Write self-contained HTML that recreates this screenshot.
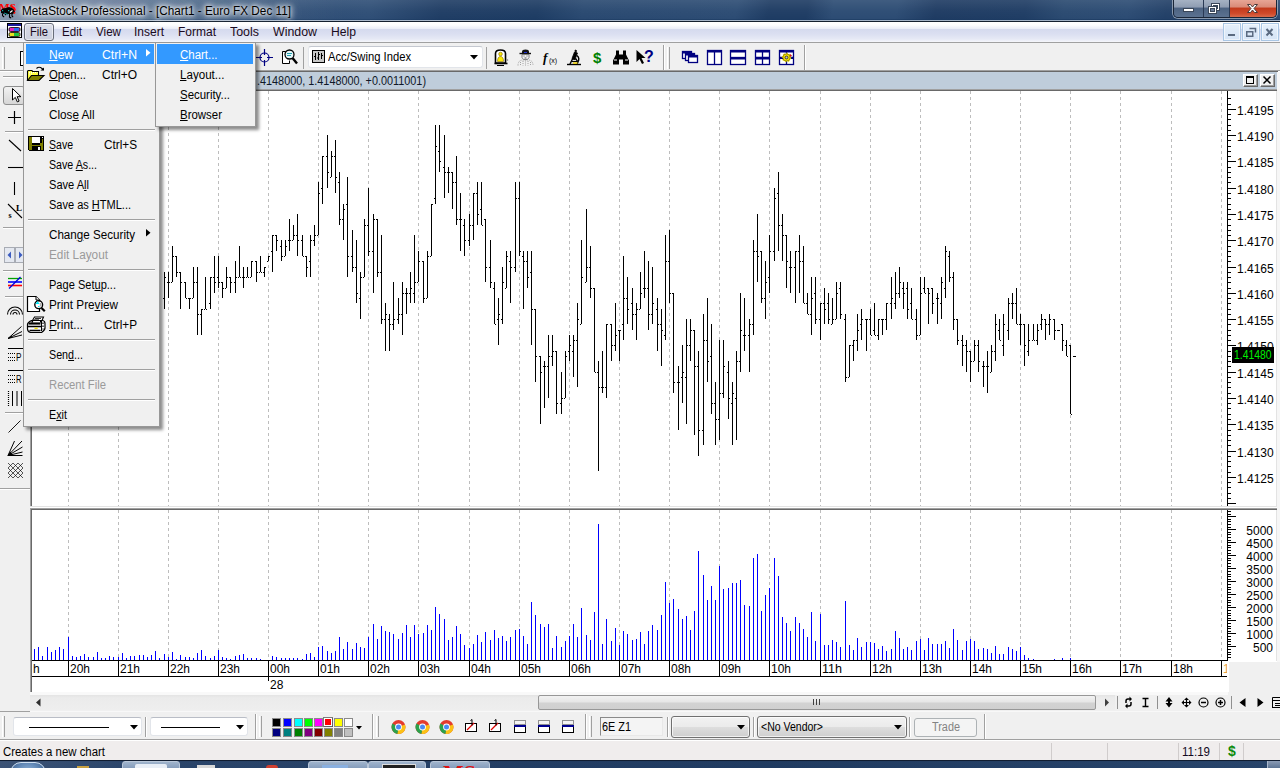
<!DOCTYPE html>
<html><head><meta charset="utf-8"><title>MetaStock Professional - [Chart1 - Euro FX Dec 11]</title>
<style>
html,body{margin:0;padding:0;background:#f0f0f0;}
body{width:1280px;height:768px;overflow:hidden;font-family:"Liberation Sans",sans-serif;font-size:12px;}
#root{position:relative;width:1280px;height:768px;overflow:hidden;background:#f0f0f0;}
.a{position:absolute;}
.t{position:absolute;white-space:nowrap;transform-origin:0 50%;line-height:14px;}
u{text-decoration:underline;text-underline-offset:1px;}
svg{position:absolute;overflow:visible;}

</style></head>
<body>
<div id="root">
<div class="a" id="titlebar" style="left:0;top:0;width:1280px;height:22px;background:linear-gradient(90deg,rgba(255,255,255,.34) 0,rgba(255,255,255,.22) 6%,rgba(255,255,255,.10) 16%,rgba(255,255,255,0) 27%),linear-gradient(180deg,rgba(255,255,255,.10) 0,rgba(255,255,255,.03) 50%,rgba(255,255,255,0) 100%),linear-gradient(100deg,#4a6485 0,#3c5a80 10%,#2b4b74 23%,#2d4d75 29%,#1d3b63 34.5%,#1b3a62 42%,#27476f 45.5%,#2a4a72 57.5%,#1c3a62 60%,#1c3a62 63%,#2a4a72 65%,#2a4a72 70%,#1c3961 73%,#1d3b63 80%,#28486f 83%,#2a4a72 88%,#203e66 91%,#233f66 96%,#2a4a72 100%);"></div>
<div class="a" style="left:0;top:19px;width:1280px;height:1px;background:linear-gradient(90deg,rgba(27,58,97,0) 0,rgba(27,58,97,.5) 30%,rgba(27,58,97,.7) 100%);"></div>
<div class="a" style="left:0;top:20px;width:1280px;height:1px;background:linear-gradient(90deg,#c9d4e0 0,#aab8ca 30%,#9fafc3 100%);"></div>
<div class="a" style="left:0;top:21px;width:1280px;height:1px;background:#15202f;"></div>
<svg style="left:0;top:0" width="20" height="20" viewBox="0 0 20 20"><text x="-1" y="11" font-family="Liberation Serif,serif" font-weight="bold" font-size="11" textLength="17" lengthAdjust="spacingAndGlyphs" fill="#ff0000">MS</text><path d="M1 10q1 -2 5 -2l3 -1 3 1q3 1 3 4l-2 2h-9l-3 -1z" fill="#000"/><path d="M11 5l4.500 5.500M14 13.500l1 -1.500" stroke="#ff0000" stroke-width="1.600"/><path d="M2.500 13.500v2l1 1.200M5 14l1 1M9.500 14v3l1 1M12 14v2.500" stroke="#000" stroke-width="1.100" fill="none"/><rect x="3" y="16" width="1.200" height="1.200" fill="#000"/><rect x="10" y="17" width="1.200" height="1.200" fill="#000"/><rect x="12" y="16" width="1.200" height="1.200" fill="#000"/><rect x="2" y="10" width="1.200" height="1.200" fill="#10b0b0"/><rect x="8" y="10" width="1.200" height="1.200" fill="#10b0b0"/><path d="M4 13l4 1.500" stroke="#109090" stroke-width="1"/><path d="M10 12.500l2.500 -2" stroke="#fff" stroke-width="1.300"/></svg>
<span class="t " style="left:22px;top:4px;font-size:12px;color:#000;transform:scaleX(0.9798);text-shadow:0 0 6px rgba(255,255,255,.95),0 0 5px rgba(255,255,255,.9),0 0 10px rgba(255,255,255,.8),0 0 14px rgba(255,255,255,.6),0 0 3px rgba(255,255,255,.7);">MetaStock Professional - [Chart1 - Euro FX Dec 11]</span>
<div class="a" style="left:1173px;top:-1px;width:102px;height:18px;border:1px solid #1a2638;border-top:none;border-radius:0 0 5px 5px;box-shadow:0 0 0 1px rgba(255,255,255,.45);overflow:hidden;"><div class="a" style="left:0;top:0;width:29px;height:18px;background:linear-gradient(180deg,#a9b5c6 0,#8f9db2 45%,#4d6382 50%,#5b7290 100%);border-right:1px solid #2a3a55;"></div><div class="a" style="left:30px;top:0;width:25px;height:18px;background:linear-gradient(180deg,#a9b5c6 0,#8f9db2 45%,#4d6382 50%,#5b7290 100%);border-right:1px solid #2a3a55;"></div><div class="a" style="left:56px;top:0;width:46px;height:18px;background:linear-gradient(180deg,#e9a99a 0,#d98a78 45%,#c2391c 50%,#d0492a 80%,#d8694a 100%);"></div></div>
<svg style="left:1173px;top:0" width="106" height="18" viewBox="0 0 106 18"><rect x="10.500" y="8.500" width="10" height="3" fill="#fff" stroke="#3a4658" stroke-width="1"/><rect x="38.500" y="3.500" width="8" height="7" fill="#fff" stroke="#3a4658"/><rect x="40.500" y="5.500" width="4" height="3" fill="#8a9ab0" stroke="#3a4658"/><rect x="35.500" y="6.500" width="8" height="7" fill="#fff" stroke="#3a4658"/><rect x="37.500" y="8.500" width="4" height="3" fill="#6a7c98" stroke="#3a4658"/><path d="M74.500 4.500h3l2 2.500 2 -2.500h3l-3.500 4 3.500 4h-3l-2 -2.500 -2 2.500h-3l3.500 -4z" fill="#fff" stroke="#4a3a3a" stroke-width="1"/></svg>
<div class="a" id="menubar" style="left:0;top:22px;width:1280px;height:20px;background:linear-gradient(180deg,#ffffff 0,#fdfdfe 3px,#e9ecf7 7px,#d5daee 7px,#dbdff1 12px,#e6e9f5 17px,#f0f2f9 19px,#f6f7fb 20px);"></div>
<div class="a" style="left:0;top:42px;width:1280px;height:1px;background:#a0a0a0;"></div>
<svg style="left:7px;top:23px" width="16" height="16" viewBox="0 0 16 16"><rect x="0.500" y="0.500" width="14" height="14" fill="#fff" stroke="#000"/><rect x="1" y="1" width="13" height="2" fill="#1a1a9a"/><rect x="2" y="4.500" width="11" height="4" rx="1.500" fill="#e020c0" stroke="#000" stroke-width=".8"/><rect x="7" y="5" width="5" height="3" fill="#2a6af0"/><rect x="2" y="9.500" width="11" height="4" rx="1.500" fill="#e8e020" stroke="#000" stroke-width=".8"/><rect x="7" y="10" width="5" height="3" fill="#20c040"/></svg>
<div class="a" style="left:24px;top:23px;width:28px;height:16px;border:1px solid #686d7a;border-radius:3px;background:linear-gradient(180deg,#dfe2ea 0,#d3d6e3 40%,#cdd1df 100%);box-shadow:inset 0 0 0 1px rgba(255,255,255,.5);"></div>
<span class="t " style="left:30px;top:25px;font-size:12px;color:#1a0a20;transform:scaleX(0.9310);">File</span>
<span class="t " style="left:62px;top:25px;font-size:12px;color:#1a0a20;transform:scaleX(0.9672);">Edit</span>
<span class="t " style="left:96px;top:25px;font-size:12px;color:#1a0a20;transform:scaleX(0.9693);">View</span>
<span class="t " style="left:134px;top:25px;font-size:12px;color:#1a0a20;transform:scaleX(0.9996);">Insert</span>
<span class="t " style="left:178px;top:25px;font-size:12px;color:#1a0a20;transform:scaleX(0.9999);">Format</span>
<span class="t " style="left:230px;top:25px;font-size:12px;color:#1a0a20;transform:scaleX(1.0353);">Tools</span>
<span class="t " style="left:273px;top:25px;font-size:12px;color:#1a0a20;transform:scaleX(1.0310);">Window</span>
<span class="t " style="left:331px;top:25px;font-size:12px;color:#1a0a20;transform:scaleX(1.0130);">Help</span>
<div class="a" style="left:1223px;top:23px;width:16px;height:16px;border:1px solid #a9c6e4;background:linear-gradient(180deg,#e6f0fb 0,#dce9f8 50%,#d6e5f6 100%);box-shadow:inset 0 0 0 1px rgba(255,255,255,.55);"></div>
<div class="a" style="left:1242px;top:23px;width:16px;height:16px;border:1px solid #a9c6e4;background:linear-gradient(180deg,#e6f0fb 0,#dce9f8 50%,#d6e5f6 100%);box-shadow:inset 0 0 0 1px rgba(255,255,255,.55);"></div>
<div class="a" style="left:1261px;top:23px;width:16px;height:16px;border:1px solid #a9c6e4;background:linear-gradient(180deg,#e6f0fb 0,#dce9f8 50%,#d6e5f6 100%);box-shadow:inset 0 0 0 1px rgba(255,255,255,.55);"></div>
<svg style="left:1223px;top:23px" width="58" height="19" viewBox="0 0 58 19"><rect x="5" y="11" width="7" height="2" fill="#5a6a80"/><path d="M26.500 5.500h6v4" fill="none" stroke="#5a6a80" stroke-width="1.500"/><rect x="23.750" y="8.750" width="6" height="4.500" fill="none" stroke="#5a6a80" stroke-width="1.500"/><path d="M43.500 6l6 6.500M49.500 6l-6 6.500" stroke="#5a6a80" stroke-width="2" fill="none"/></svg>
<div class="a" id="toolbar" style="left:0;top:43px;width:1280px;height:28px;background:#f0f0f0;"></div>
<div class="a" style="left:0;top:70px;width:1280px;height:1px;background:#a0a0a0;"></div>
<div class="a" style="left:0;top:71px;width:1280px;height:1px;background:#fff;"></div>
<div class="a" style="left:2px;top:47px;width:2px;height:22px;border-left:1px solid #fff;border-right:1px solid #a0a0a0;box-sizing:border-box;width:3px;"></div>
<div class="a" style="left:20px;top:51px;width:4px;height:13px;border:1px solid #000;border-right:none;background:#fff;"></div>
<svg style="left:256px;top:49px" width="18" height="18" viewBox="0 0 18 18"><circle cx="8.500" cy="8.500" r="4.500" fill="none" stroke="#000080" stroke-width="1.200"/><path d="M8.500 0v6M8.500 11v6M0 8.500h6M11 8.500h6" stroke="#000080" stroke-width="1.200"/></svg>
<svg style="left:280px;top:48px" width="20" height="20" viewBox="0 0 20 20"><path d="M2.500 3.500h8v4M2.500 3.500v12h7v-3" fill="#fff" stroke="#000" stroke-width="1"/><circle cx="9.500" cy="6.500" r="4.500" fill="#e6f6f8" stroke="#000" stroke-width="1.300"/><path d="M7 5.500h5M7 7.500h4" stroke="#20a0b0" stroke-width="1"/><path d="M12.500 10l4.500 5.500" stroke="#000" stroke-width="2.400"/></svg>
<div class="a" style="left:303px;top:47px;width:1px;height:22px;background:#a0a0a0;"></div>
<div class="a" style="left:308px;top:46px;width:175px;height:22px;box-sizing:border-box;background:#fff;border-radius:3px;border:1px solid #e2e5ea;border-top-color:#c4c8d0;"></div>
<svg style="left:312px;top:50px" width="14" height="14" viewBox="0 0 14 14"><rect x="0.500" y="0.500" width="12" height="12" fill="#c8c8c8" stroke="#000"/><path d="M3.500 3v7M6.500 2v8M9.500 3v6M2 6.500h1.500M6.500 4.500h1.500M9.500 5.500h1.500M5 8h1.500" stroke="#000" stroke-width="1"/></svg>
<span class="t " style="left:328px;top:50px;font-size:12px;color:#000;transform:scaleX(0.9356);">Acc/Swing Index</span>
<svg style="left:470px;top:55px" width="8" height="5" viewBox="0 0 8 5"><path d="M0 0h8l-4 4.500z" fill="#000"/></svg>
<div class="a" style="left:486px;top:47px;width:1px;height:22px;background:#a0a0a0;"></div>
<svg style="left:492px;top:48px" width="20" height="18" viewBox="492 48 20 18"><path d="M495.500 63v-9.500q0 -3.500 5 -3.500t5 3.500v9.500z" fill="#fff" stroke="#000" stroke-width="1.600"/><path d="M506.500 58.500l2 1.500 -2 1.500z" fill="#909090"/><path d="M494.500 63.500h13" stroke="#000" stroke-width="1.600"/><path d="M497 65.500h7" stroke="#000" stroke-width="1"/><circle cx="500.500" cy="54" r="1.800" fill="#f8e800" stroke="#806000" stroke-width=".6"/><path d="M497.500 61.500q0 -5 3 -5t3 5z" fill="#f8e800" stroke="#806000" stroke-width=".6"/></svg>
<svg style="left:516px;top:48px" width="20" height="18" viewBox="516 48 20 18"><path d="M519.500 53.500h11.500" stroke="#111" stroke-width="1.400"/><path d="M522 53v-1.500q0 -2 3.500 -2t3.500 2v1.500z" fill="#111"/><path d="M524 52.500h3" stroke="#2030d0" stroke-width="1"/><path d="M522 54.500h7v3l-1.500 2h-4l-1.500 -2z" fill="#f4f4f4" stroke="#666" stroke-width=".8"/><path d="M523.500 56h1M526.500 56h1M524.500 58h2" stroke="#333" stroke-width=".8"/><path d="M518 65.500q0 -5.500 5 -5.500h5q5 0 5 5.500M520.500 62v3.500M523 61v4.500M525.500 60.500v5M528 61v4.500M530.500 62v3.500" fill="none" stroke="#9a9a9a" stroke-width=".9" stroke-dasharray="1 1"/></svg>
<span class="t" style="left:543px;top:50px;font-family:'Liberation Serif',serif;font-style:italic;font-weight:bold;font-size:13px;line-height:15px;color:#000;">f</span>
<span class="t" style="left:549px;top:56px;font-size:7px;line-height:9px;color:#000;">(x)</span>
<svg style="left:565px;top:48px" width="18" height="18" viewBox="565 48 18 18"><path d="M567 64.500h14" stroke="#000" stroke-width="1.400"/><path d="M575 50l1.500 .5 -.5 2 1.500 .5 -2.500 6.500 -3 -1 2.500 -6.500 1 .3z" fill="#000" stroke="#000" stroke-width=".8"/><path d="M570 64l2.500 -5h3.500l1.500 2.500M577 55.500q3 2.500 1 6.500l-1 2" fill="none" stroke="#000" stroke-width="1.400"/><path d="M571.500 61.500h6" stroke="#000" stroke-width="1.200"/><rect x="573" y="62.300" width="4.500" height="1.500" fill="#f0d000"/></svg>
<span class="t " style="left:593px;top:49px;font-size:15px;color:#008000;font-weight:bold;line-height:17px;">$</span>
<svg style="left:612px;top:49px" width="18" height="16" viewBox="0 0 18 16"><path d="M4 1.500h3v4h4v-4h3v4l3 6v4h-6v-5h-4v5h-6v-4l3 -6z" fill="#000"/><path d="M2 11h3M13 11h3" stroke="#fff" stroke-width="1"/></svg>
<svg style="left:635px;top:49px" width="20" height="18" viewBox="0 0 20 18"><path d="M1.500 1v12l3 -3 2.500 5 2 -1 -2.500 -5h4z" fill="#000"/></svg>
<span class="t " style="left:644px;top:48px;font-size:16px;color:#000080;font-weight:bold;line-height:17px;">?</span>
<div class="a" style="left:663px;top:45px;width:1px;height:25px;background:#a0a0a0;"></div><div class="a" style="left:664px;top:45px;width:1px;height:25px;background:#fff;"></div>
<div class="a" style="left:667px;top:47px;width:2px;height:22px;border-left:1px solid #fff;border-right:1px solid #a0a0a0;box-sizing:border-box;width:3px;"></div>
<svg style="left:680px;top:47px" width="120" height="20" viewBox="0 0 120 20"><g fill="#fff" stroke="#000080" stroke-width="1.300"><rect x="2.500" y="4.500" width="9" height="7"/><rect x="5.500" y="6.500" width="9" height="7"/><rect x="8.500" y="8.500" width="9" height="7"/><rect x="27.500" y="3.500" width="14" height="14"/><path d="M34.500 3.500v14"/><rect x="50.500" y="3.500" width="15" height="14"/><path d="M50.500 10.500h15"/><rect x="75.500" y="3.500" width="14" height="14"/><path d="M82.500 3.500v14M75.500 10.500h14"/><rect x="99.500" y="3.500" width="14" height="14"/></g><g fill="#000080"><rect x="2" y="4" width="10" height="2.500"/><rect x="5" y="6" width="10" height="2.500"/><rect x="8" y="8" width="10" height="2.500"/><rect x="27" y="3" width="15" height="2.500"/><rect x="50" y="3" width="16" height="2.500"/><rect x="50" y="10" width="16" height="2.500"/><rect x="75" y="3" width="15" height="2.500"/><rect x="75" y="10" width="15" height="2.500"/><rect x="99" y="3" width="15" height="2.500"/></g><path d="M106.500 3.500v14M99.500 10.500h14" stroke="#000080" stroke-width="1.300"/><rect x="99" y="10" width="15" height="2" fill="#000080"/><circle cx="106.500" cy="10.500" r="3.600" fill="#f0e000" stroke="#e8d800" stroke-width="2.200" stroke-dasharray="1.600 1.100"/><circle cx="106.500" cy="10.500" r="3.600" fill="#f0e000" stroke="#504000" stroke-width=".5"/><circle cx="106.500" cy="10.500" r="1.400" fill="#c0c0d0" stroke="#202020" stroke-width=".8"/><path d="M110 7l2 1.500 -2 1.500z" fill="#d01010"/></svg>
<div class="a" style="left:804px;top:45px;width:1px;height:25px;background:#a0a0a0;"></div><div class="a" style="left:805px;top:45px;width:1px;height:25px;background:#fff;"></div>
<div class="a" id="lefttb" style="left:0;top:72px;width:30px;height:640px;background:#f0f0f0;"></div>
<div class="a" style="left:3px;top:76px;width:21px;height:1px;background:#a0a0a0;"></div><div class="a" style="left:3px;top:77px;width:21px;height:1px;background:#fff;"></div>
<div class="a" style="left:3px;top:86px;width:22px;height:19px;border:1px solid #8e8f8f;border-radius:3px;background:linear-gradient(180deg,#f2f2f2 0,#e4e4e4 50%,#d6d6d6 100%);box-sizing:border-box;"></div>
<svg style="left:0;top:80px" width="30" height="420" viewBox="0 80 30 420"><path d="M12.500 88.500v11.500l2.800 -2.600 2 4.500 1.800 -.8 -2 -4.400h3.800z" fill="#fff" stroke="#000" stroke-width="1"/><path d="M14.500 111v13M8 117.500h13" stroke="#000" stroke-width="1.200"/><path d="M5 131.500h20" stroke="#a0a0a0"/><path d="M5 132.500h20" stroke="#fff"/><path d="M9 140l12 11" stroke="#000" stroke-width="1.100"/><path d="M8 167.500h15" stroke="#000" stroke-width="1.100"/><path d="M14.500 182v13" stroke="#000" stroke-width="1.100"/><path d="M8 204l14 14" stroke="#000" stroke-width="1.100"/><text x="16" y="211" font-size="9" font-weight="bold" font-family="Liberation Serif,serif">L</text><text x="8.500" y="218" font-size="8" font-weight="bold" font-family="Liberation Serif,serif">s</text><path d="M3 227.500h22" stroke="#a0a0a0"/><path d="M3 228.500h22" stroke="#fff"/><rect x="4.500" y="247.500" width="10" height="15" fill="#e4e8f0" stroke="#a8acb4"/><rect x="15.500" y="247.500" width="10" height="15" fill="#e4e8f0" stroke="#a8acb4"/><path d="M11 251.500l-3.500 3.500 3.500 3.500zM19 251.500l3.500 3.500 -3.500 3.500z" fill="#3c5cc0"/><path d="M3 270.500h22" stroke="#a0a0a0"/><path d="M3 271.500h22" stroke="#fff"/><path d="M8 278.500h14" stroke="#00a000" stroke-width="1.300"/><path d="M8 282h14" stroke="#0000ff" stroke-width="1.600"/><path d="M8 285.500h14" stroke="#ff0000" stroke-width="1.600"/><path d="M9 288.500l11.500 -11.500" stroke="#0000e0" stroke-width="1.200"/><path d="M5 296.500h20" stroke="#a0a0a0"/><path d="M5 297.500h20" stroke="#fff"/><path d="M7.500 314.500a7.500 7.500 0 0 1 15 0M10.500 314.500a4.500 4.500 0 0 1 9 0M13 314.500a2 2 0 0 1 4 0" fill="none" stroke="#000" stroke-width="1.100"/><path d="M8 338.500l13.500 -12M8 338.500l14 -7M8 338.500l14 -3.500" stroke="#000" stroke-width="1"/><path d="M8 338.500l3.500 -3 .5 2z" fill="#000"/><path d="M8 348.500h15" stroke="#000"/><path d="M8 353.500h7M8 357.500h7M8 360.500h7" stroke="#000" stroke-dasharray="1 1"/><text x="16" y="361" font-size="11" textLength="5.500" lengthAdjust="spacingAndGlyphs" font-family="Liberation Sans,sans-serif">P</text><path d="M8 370.500h15" stroke="#000"/><path d="M8 375.500h7M8 379.500h7M8 382.500h7" stroke="#000" stroke-dasharray="1 1"/><text x="16" y="383" font-size="11" textLength="5.500" lengthAdjust="spacingAndGlyphs" font-family="Liberation Sans,sans-serif">R</text><path d="M8.500 391v15" stroke="#000" stroke-width="1.200" stroke-dasharray="1 1"/><path d="M12.500 391v15M17 391v15M21.500 391v15" stroke="#000" stroke-width="1"/><path d="M5 412.500h20" stroke="#a0a0a0"/><path d="M5 413.500h20" stroke="#fff"/><path d="M8.500 432.500l12 -12" stroke="#000" stroke-width=".9"/><path d="M8 455.500l6.500 -14.500M8 455.500l14 -14.500M8 455.500l14.500 -8.500M8 455.500l14.500 -3.500M8 455.500h14.500" stroke="#000" stroke-width="1"/><path d="M7.500 455.500l3 -4 2 4z" fill="#000"/><path d="M8 463l15 15M13 463l10 10M18 463l5 5M8 468l10 10M8 473l5 5M23 463l-15 15M18 463l-10 10M13 463l-5 5M23 468l-10 10M23 473l-5 5" stroke="#000" stroke-width=".65"/></svg>
<div class="a" style="left:0;top:488px;width:30px;height:1px;background:#a0a0a0;"></div><div class="a" style="left:0;top:489px;width:30px;height:1px;background:#fff;"></div>
<div class="a" style="left:30px;top:72px;width:1247px;height:17px;background:#bfcddb;"></div>
<div class="a" style="left:30px;top:71px;width:1248px;height:1px;background:#696969;"></div>
<div class="a" style="left:30px;top:89px;width:1247px;height:1px;background:#a0a0a0;"></div><div class="a" style="left:30px;top:90px;width:1247px;height:1px;background:#696969;"></div>
<span class="t " style="left:257px;top:74px;font-size:12px;color:#101828;transform:scaleX(0.9040);">.4148000, 1.4148000, +0.0011001)</span>
<div class="a" style="left:1243px;top:74px;width:15px;height:13px;box-sizing:border-box;background:#f0f0f0;border-top:1px solid #fff;border-left:1px solid #fff;border-right:1px solid #696969;border-bottom:1px solid #696969;box-shadow:inset -1px -1px 0 #a0a0a0;"></div>
<div class="a" style="left:1260px;top:74px;width:15px;height:13px;box-sizing:border-box;background:#f0f0f0;border-top:1px solid #fff;border-left:1px solid #fff;border-right:1px solid #696969;border-bottom:1px solid #696969;box-shadow:inset -1px -1px 0 #a0a0a0;"></div>
<svg style="left:1243px;top:74px" width="34" height="14" viewBox="1243 74 34 14"><rect x="1246.500" y="77.500" width="7" height="6" fill="none" stroke="#000"/><path d="M1246 77h8" stroke="#000" stroke-width="2"/><path d="M1263.500 76.500l7 7M1270.500 76.500l-7 7" stroke="#000" stroke-width="1.500"/></svg>
<div class="a" id="chartbg" style="left:30px;top:91px;width:1247px;height:601px;background:#fff;"></div><div class="a" style="left:1277px;top:72px;width:3px;height:640px;background:#f6f6f6;"></div>
<div class="a" style="left:1229px;top:662px;width:51px;height:31px;background:#f0f0f0;"></div>
<div class="a" style="left:1276px;top:91px;width:1px;height:570px;background:#e3e3e3;"></div>
<svg id="chart" style="left:0;top:0" width="1280" height="768" viewBox="0 0 1280 768" shape-rendering="crispEdges">
<path d="M68.5 91V506M68.5 510V660M118.5 91V506M118.5 510V660M168.5 91V506M168.5 510V660M218.5 91V506M218.5 510V660M268.5 91V506M268.5 510V660M318.5 91V506M318.5 510V660M368.5 91V506M368.5 510V660M418.5 91V506M418.5 510V660M469.5 91V506M469.5 510V660M519.5 91V506M519.5 510V660M569.5 91V506M569.5 510V660M619.5 91V506M619.5 510V660M669.5 91V506M669.5 510V660M719.5 91V506M719.5 510V660M769.5 91V506M769.5 510V660M820.5 91V506M820.5 510V660M870.5 91V506M870.5 510V660M920.5 91V506M920.5 510V660M970.5 91V506M970.5 510V660M1020.5 91V506M1020.5 510V660M1070.5 91V506M1070.5 510V660M1120.5 91V506M1120.5 510V660M1171.5 91V506M1171.5 510V660M1221.5 91V506M1221.5 510V660" stroke="#bdbdbd" stroke-width="1" stroke-dasharray="3 3" fill="none"/>
<path d="M164.5 272V309M163 298.5h1M165 277.5h1M168.5 272V298M167 282.5h1M169 282.5h1M172.5 246V282M171 282.5h1M173 256.5h1M176.5 256V277M175 256.5h1M177 272.5h1M180.5 272V309M179 272.5h1M181 282.5h1M185.5 282V298M184 282.5h1M186 298.5h1M189.5 298V309M188 298.5h1M190 298.5h1M193.5 267V298M192 298.5h1M194 282.5h1M197.5 267V335M196 282.5h1M198 314.5h1M201.5 309V335M200 314.5h1M202 309.5h1M205.5 277V309M204 309.5h1M206 309.5h1M210.5 277V309M209 303.5h1M211 277.5h1M214.5 256V293M213 277.5h1M215 282.5h1M218.5 256V288M217 277.5h1M219 282.5h1M222.5 282V298M221 282.5h1M223 288.5h1M226.5 267V288M225 288.5h1M227 277.5h1M230.5 277V293M229 277.5h1M231 282.5h1M235.5 261V293M234 282.5h1M236 277.5h1M239.5 246V277M238 277.5h1M240 277.5h1M243.5 267V288M242 277.5h1M244 277.5h1M247.5 267V277M246 277.5h1M248 277.5h1M251.5 261V277M250 277.5h1M252 261.5h1M256.5 261V282M255 261.5h1M257 272.5h1M260.5 256V272M259 272.5h1M261 272.5h1M264.5 267V277M263 272.5h1M265 267.5h1M268.5 256V261M267 261.5h1M269 256.5h1M272.5 235V272M271 251.5h1M273 235.5h1M276.5 235V251M275 235.5h1M277 240.5h1M281.5 240V261M280 246.5h1M282 256.5h1M285.5 240V256M284 256.5h1M286 246.5h1M289.5 219V251M288 240.5h1M290 240.5h1M293.5 225V240M292 240.5h1M294 235.5h1M297.5 214V256M296 235.5h1M298 240.5h1M302.5 235V256M301 240.5h1M303 256.5h1M306.5 256V277M305 256.5h1M307 267.5h1M310.5 235V277M309 261.5h1M311 240.5h1M314.5 225V246M313 240.5h1M315 235.5h1M318.5 182V235M317 235.5h1M319 193.5h1M322.5 156V204M321 188.5h1M323 156.5h1M327.5 135V188M326 156.5h1M328 172.5h1M331.5 151V177M330 177.5h1M332 156.5h1M335.5 140V193M334 156.5h1M336 177.5h1M339.5 172V225M338 182.5h1M340 219.5h1M343.5 204V240M342 219.5h1M344 209.5h1M347.5 177V277M346 204.5h1M348 256.5h1M352.5 230V272M351 256.5h1M353 267.5h1M356.5 240V303M355 267.5h1M357 293.5h1M360.5 272V319M359 298.5h1M361 277.5h1M364.5 219V277M363 277.5h1M365 225.5h1M368.5 188V256M367 225.5h1M369 251.5h1M373.5 214V293M372 251.5h1M374 219.5h1M377.5 219V277M376 219.5h1M378 272.5h1M381.5 235V324M380 272.5h1M382 319.5h1M385.5 303V351M384 319.5h1M386 314.5h1M389.5 314V351M388 319.5h1M390 324.5h1M393.5 282V330M392 324.5h1M394 319.5h1M398.5 298V324M397 319.5h1M399 314.5h1M402.5 282V335M401 314.5h1M403 293.5h1M406.5 288V314M405 293.5h1M407 293.5h1M410.5 272V303M409 293.5h1M411 288.5h1M414.5 235V303M413 293.5h1M415 282.5h1M418.5 251V282M417 282.5h1M419 261.5h1M423.5 261V303M422 261.5h1M424 298.5h1M427.5 251V298M426 298.5h1M428 256.5h1M431.5 204V256M430 256.5h1M432 204.5h1M435.5 125V204M434 198.5h1M436 146.5h1M439.5 125V172M438 151.5h1M440 161.5h1M444.5 135V198M443 167.5h1M445 172.5h1M448.5 167V193M447 172.5h1M449 172.5h1M452.5 172V209M451 172.5h1M453 182.5h1M456.5 156V225M455 182.5h1M457 219.5h1M460.5 193V251M459 219.5h1M461 219.5h1M464.5 219V256M463 225.5h1M465 240.5h1M469.5 214V246M468 240.5h1M470 225.5h1M473.5 193V240M472 225.5h1M474 193.5h1M477.5 182V225M476 193.5h1M478 214.5h1M481.5 182V225M480 209.5h1M482 225.5h1M485.5 219V282M484 219.5h1M486 267.5h1M490.5 240V288M489 267.5h1M491 282.5h1M494.5 282V324M493 288.5h1M495 324.5h1M498.5 298V345M497 319.5h1M499 314.5h1M502.5 267V324M501 319.5h1M503 282.5h1M506.5 251V288M505 288.5h1M507 256.5h1M510.5 251V303M509 261.5h1M511 267.5h1M515.5 182V272M514 267.5h1M516 198.5h1M519.5 182V256M518 198.5h1M520 251.5h1M523.5 251V309M522 256.5h1M524 261.5h1M527.5 251V288M526 261.5h1M528 277.5h1M531.5 251V345M530 272.5h1M532 309.5h1M535.5 309V382M534 309.5h1M536 356.5h1M540.5 356V424M539 356.5h1M541 372.5h1M544.5 361V408M543 366.5h1M545 366.5h1M548.5 335V398M547 366.5h1M549 356.5h1M552.5 335V366M551 356.5h1M553 351.5h1M556.5 351V414M555 351.5h1M557 403.5h1M561.5 372V414M560 403.5h1M562 398.5h1M565.5 351V398M564 398.5h1M566 356.5h1M569.5 335V361M568 351.5h1M570 345.5h1M573.5 335V377M572 351.5h1M574 340.5h1M577.5 303V387M576 340.5h1M578 319.5h1M581.5 240V324M580 324.5h1M582 277.5h1M586.5 209V282M585 282.5h1M587 267.5h1M590.5 246V298M589 267.5h1M591 288.5h1M594.5 288V372M593 288.5h1M595 372.5h1M598.5 361V471M597 372.5h1M599 387.5h1M602.5 351V393M601 387.5h1M603 387.5h1M606.5 324V398M605 387.5h1M607 324.5h1M611.5 324V361M610 324.5h1M612 345.5h1M615.5 303V351M614 345.5h1M616 335.5h1M619.5 330V361M618 330.5h1M620 330.5h1M623.5 256V340M622 324.5h1M624 298.5h1M627.5 277V324M626 298.5h1M628 309.5h1M632.5 288V330M631 303.5h1M633 314.5h1M636.5 303V340M635 314.5h1M637 309.5h1M640.5 272V309M639 309.5h1M641 293.5h1M644.5 251V298M643 288.5h1M645 288.5h1M648.5 261V330M647 288.5h1M649 314.5h1M652.5 267V324M651 314.5h1M653 303.5h1M657.5 298V351M656 309.5h1M658 324.5h1M661.5 309V366M660 324.5h1M662 330.5h1M665.5 235V340M664 335.5h1M666 261.5h1M669.5 230V303M668 261.5h1M670 293.5h1M673.5 293V393M672 293.5h1M674 382.5h1M678.5 366V430M677 382.5h1M679 382.5h1M682.5 345V403M681 377.5h1M683 372.5h1M686.5 319V424M685 377.5h1M687 345.5h1M690.5 319V361M689 345.5h1M691 330.5h1M694.5 330V435M693 330.5h1M695 366.5h1M698.5 351V456M697 366.5h1M699 430.5h1M703.5 314V445M702 430.5h1M704 340.5h1M707.5 298V382M706 340.5h1M708 361.5h1M711.5 324V414M710 356.5h1M712 403.5h1M715.5 382V445M714 403.5h1M716 419.5h1M719.5 340V440M718 419.5h1M720 393.5h1M723.5 340V398M722 393.5h1M724 366.5h1M728.5 361V419M727 372.5h1M729 398.5h1M732.5 382V445M731 403.5h1M733 393.5h1M736.5 351V440M735 398.5h1M737 361.5h1M740.5 293V372M739 361.5h1M741 330.5h1M744.5 298V351M743 335.5h1M745 335.5h1M749.5 319V372M748 335.5h1M750 324.5h1M753.5 240V335M752 324.5h1M754 251.5h1M757.5 214V282M756 251.5h1M758 256.5h1M761.5 251V303M760 251.5h1M762 298.5h1M765.5 261V319M764 298.5h1M766 282.5h1M769.5 235V293M768 277.5h1M770 251.5h1M774.5 188V261M773 251.5h1M775 198.5h1M778.5 172V251M777 193.5h1M779 225.5h1M782.5 214V261M781 225.5h1M783 235.5h1M786.5 235V288M785 235.5h1M787 261.5h1M790.5 251V293M789 267.5h1M791 267.5h1M795.5 251V303M794 267.5h1M796 251.5h1M799.5 235V293M798 251.5h1M800 261.5h1M803.5 246V303M802 261.5h1M804 303.5h1M807.5 293V314M806 303.5h1M808 314.5h1M811.5 277V335M810 314.5h1M812 298.5h1M815.5 277V324M814 293.5h1M816 319.5h1M820.5 303V340M819 319.5h1M821 303.5h1M824.5 288V324M823 303.5h1M825 309.5h1M828.5 293V324M827 303.5h1M829 319.5h1M832.5 298V324M831 324.5h1M833 319.5h1M836.5 282V319M835 319.5h1M837 293.5h1M840.5 282V319M839 288.5h1M841 314.5h1M845.5 314V382M844 319.5h1M846 377.5h1M849.5 345V377M848 377.5h1M850 345.5h1M853.5 340V361M852 345.5h1M854 340.5h1M857.5 314V351M856 340.5h1M858 330.5h1M861.5 309V340M860 324.5h1M862 319.5h1M866.5 319V351M865 319.5h1M867 319.5h1M870.5 309V335M869 319.5h1M871 335.5h1M874.5 303V335M873 330.5h1M875 335.5h1M878.5 319V340M877 335.5h1M879 319.5h1M882.5 319V335M881 319.5h1M883 319.5h1M886.5 303V330M885 319.5h1M887 303.5h1M891.5 277V319M890 303.5h1M892 298.5h1M895.5 272V309M894 303.5h1M896 293.5h1M899.5 267V298M898 293.5h1M900 282.5h1M903.5 282V309M902 288.5h1M904 293.5h1M907.5 282V319M906 288.5h1M908 309.5h1M911.5 288V319M910 303.5h1M912 319.5h1M916.5 309V340M915 319.5h1M917 335.5h1M920.5 277V335M919 335.5h1M921 293.5h1M924.5 277V293M923 288.5h1M925 293.5h1M928.5 288V324M927 288.5h1M929 293.5h1M932.5 288V314M931 288.5h1M933 303.5h1M937.5 293V324M936 298.5h1M938 298.5h1M941.5 277V319M940 303.5h1M942 282.5h1M945.5 246V298M944 288.5h1M946 251.5h1M949.5 251V282M948 256.5h1M950 277.5h1M953.5 272V330M952 277.5h1M954 319.5h1M957.5 319V345M956 319.5h1M958 340.5h1M962.5 335V366M961 340.5h1M963 345.5h1M966.5 340V372M965 345.5h1M967 351.5h1M970.5 351V382M969 351.5h1M971 361.5h1M974.5 340V361M973 361.5h1M975 345.5h1M978.5 340V372M977 345.5h1M979 361.5h1M983.5 361V387M982 366.5h1M984 366.5h1M987.5 351V393M986 366.5h1M988 366.5h1M991.5 345V372M990 372.5h1M992 351.5h1M995.5 314V361M994 351.5h1M996 324.5h1M999.5 319V340M998 330.5h1M1000 340.5h1M1003.5 314V356M1002 345.5h1M1004 324.5h1M1008.5 298V340M1007 330.5h1M1009 303.5h1M1012.5 293V319M1011 303.5h1M1013 303.5h1M1016.5 288V324M1015 303.5h1M1017 324.5h1M1020.5 314V345M1019 324.5h1M1021 324.5h1M1024.5 324V366M1023 324.5h1M1025 345.5h1M1028.5 324V356M1027 351.5h1M1029 340.5h1M1033.5 324V340M1032 340.5h1M1034 340.5h1M1037.5 324V345M1036 340.5h1M1038 330.5h1M1041.5 314V330M1040 324.5h1M1042 319.5h1M1045.5 319V340M1044 319.5h1M1046 324.5h1M1049.5 314V335M1048 324.5h1M1050 319.5h1M1054.5 319V340M1053 319.5h1M1055 330.5h1M1058 330.5h1M1057 330.5h1M1059 330.5h1M1062.5 324V351M1061 324.5h1M1063 340.5h1M1066.5 340V356M1065 345.5h1M1067 356.5h1M1070.5 345V414M1069 345.5h1M1071 414.5h1M1074 356.5h1M1073 356.5h1M1075 356.5h1" stroke="#000" stroke-width="1" fill="none"/>
<path d="M34.5 649V660M38.5 647V660M42.5 656V660M47.5 647V660M51.5 652V660M55.5 650V660M59.5 647V660M63.5 649V660M68.5 637V660M72.5 656V660M76.5 657V660M80.5 656V660M84.5 654V660M88.5 657V660M93.5 657V660M97.5 652V660M101.5 658V660M105.5 658V660M109.5 656V660M113.5 657V660M118.5 657V660M122.5 653V660M126.5 658V660M130.5 656V660M134.5 656V660M139.5 655V660M143.5 655V660M147.5 657V660M151.5 655V660M155.5 651V660M159.5 658V660M164.5 654V660M168.5 657V660M172.5 652V660M176.5 659V660M180.5 655V660M185.5 657V660M189.5 657V660M193.5 658V660M197.5 653V660M201.5 650V660M205.5 656V660M210.5 658V660M214.5 656V660M218.5 650V660M222.5 657V660M226.5 658V660M230.5 659V660M235.5 656V660M239.5 655V660M243.5 654V660M247.5 658V660M251.5 658V660M256.5 658V660M260.5 659V660M272.5 656V660M276.5 657V660M281.5 658V660M285.5 658V660M289.5 658V660M293.5 658V660M297.5 658V660M302.5 659V660M306.5 654V660M310.5 653V660M314.5 657V660M318.5 647V660M322.5 646V660M327.5 651V660M331.5 653V660M335.5 651V660M339.5 637V660M343.5 649V660M347.5 642V660M352.5 649V660M356.5 643V660M360.5 647V660M364.5 648V660M368.5 637V660M373.5 624V660M377.5 639V660M381.5 626V660M385.5 631V660M389.5 632V660M393.5 634V660M398.5 639V660M402.5 633V660M406.5 625V660M410.5 637V660M414.5 625V660M418.5 634V660M423.5 633V660M427.5 625V660M431.5 630V660M435.5 607V660M439.5 614V660M444.5 619V660M448.5 640V660M452.5 637V660M456.5 626V660M460.5 634V660M464.5 645V660M469.5 648V660M473.5 644V660M477.5 635V660M481.5 642V660M485.5 632V660M490.5 640V660M494.5 630V660M498.5 638V660M502.5 636V660M506.5 641V660M510.5 637V660M515.5 630V660M519.5 629V660M523.5 636V660M527.5 644V660M531.5 602V660M535.5 615V660M540.5 624V660M544.5 627V660M548.5 624V660M552.5 648V660M556.5 636V660M561.5 647V660M565.5 641V660M569.5 636V660M573.5 624V660M577.5 637V660M581.5 608V660M586.5 635V660M590.5 640V660M594.5 612V660M598.5 524V660M602.5 644V660M606.5 619V660M611.5 641V660M615.5 628V660M619.5 645V660M623.5 631V660M627.5 634V660M632.5 640V660M636.5 639V660M640.5 632V660M644.5 644V660M648.5 631V660M652.5 625V660M657.5 630V660M661.5 615V660M665.5 582V660M669.5 603V660M673.5 599V660M678.5 609V660M682.5 619V660M686.5 616V660M690.5 630V660M694.5 611V660M698.5 551V660M703.5 575V660M707.5 600V660M711.5 586V660M715.5 600V660M719.5 566V660M723.5 589V660M728.5 588V660M732.5 583V660M736.5 583V660M740.5 580V660M744.5 605V660M749.5 606V660M753.5 558V660M757.5 554V660M761.5 611V660M765.5 595V660M769.5 588V660M774.5 558V660M778.5 576V660M782.5 617V660M786.5 623V660M790.5 631V660M795.5 617V660M799.5 623V660M803.5 629V660M807.5 637V660M811.5 612V660M815.5 641V660M820.5 614V660M824.5 645V660M828.5 645V660M832.5 640V660M836.5 642V660M840.5 647V660M845.5 601V660M849.5 645V660M853.5 650V660M857.5 638V660M861.5 647V660M866.5 642V660M870.5 642V660M874.5 643V660M878.5 649V660M882.5 646V660M886.5 651V660M891.5 649V660M895.5 631V660M899.5 638V660M903.5 649V660M907.5 647V660M911.5 650V660M916.5 641V660M920.5 639V660M924.5 650V660M928.5 638V660M932.5 644V660M937.5 644V660M941.5 644V660M945.5 641V660M949.5 648V660M953.5 629V660M957.5 640V660M962.5 650V660M966.5 641V660M970.5 639V660M974.5 641V660M978.5 649V660M983.5 648V660M987.5 649V660M991.5 653V660M995.5 646V660M999.5 654V660M1003.5 654V660M1008.5 647V660M1012.5 649V660M1016.5 651V660M1020.5 647V660M1024.5 655V660M1028.5 658V660M1033.5 659V660M1054.5 659V660M1062.5 658V660M1070.5 658V660" stroke="#0000ff" stroke-width="1" fill="none"/>
<rect x="30" y="89" width="1" height="603" fill="#a0a0a0"/><rect x="31" y="90" width="1" height="602" fill="#696969"/>
<rect x="30" y="506" width="1247" height="1" fill="#e3e3e3"/><rect x="30" y="507" width="1247" height="1" fill="#fff"/><rect x="30" y="508" width="1247" height="1" fill="#a0a0a0"/><rect x="31" y="509" width="1246" height="1" fill="#696969"/>
<rect x="1227" y="91" width="1" height="415" fill="#000"/><rect x="1227" y="510" width="1" height="151" fill="#000"/>
<path d="M1228 98.5h3M1228 104.5h3M1228 109.5h8M1228 114.5h3M1228 119.5h3M1228 125.5h3M1228 130.5h3M1228 135.5h8M1228 140.5h3M1228 146.5h3M1228 151.5h3M1228 156.5h3M1228 161.5h8M1228 167.5h3M1228 172.5h3M1228 177.5h3M1228 182.5h3M1228 188.5h8M1228 193.5h3M1228 198.5h3M1228 204.5h3M1228 209.5h3M1228 214.5h8M1228 219.5h3M1228 225.5h3M1228 230.5h3M1228 235.5h3M1228 240.5h8M1228 246.5h3M1228 251.5h3M1228 256.5h3M1228 261.5h3M1228 267.5h8M1228 272.5h3M1228 277.5h3M1228 282.5h3M1228 288.5h3M1228 293.5h8M1228 298.5h3M1228 303.5h3M1228 309.5h3M1228 314.5h3M1228 319.5h8M1228 324.5h3M1228 330.5h3M1228 335.5h3M1228 340.5h3M1228 345.5h8M1228 351.5h3M1228 356.5h3M1228 361.5h3M1228 366.5h3M1228 372.5h8M1228 377.5h3M1228 382.5h3M1228 387.5h3M1228 393.5h3M1228 398.5h8M1228 403.5h3M1228 408.5h3M1228 414.5h3M1228 419.5h3M1228 424.5h8M1228 430.5h3M1228 435.5h3M1228 440.5h3M1228 445.5h3M1228 451.5h8M1228 456.5h3M1228 461.5h3M1228 466.5h3M1228 472.5h3M1228 477.5h8M1228 482.5h3M1228 487.5h3M1228 493.5h3M1228 498.5h3M1228 503.5h8" stroke="#000" stroke-width="1" fill="none"/>
<path d="M1228 657.5h3M1228 654.5h3M1228 652.5h3M1228 649.5h3M1228 646.5h8M1228 644.5h3M1228 641.5h3M1228 639.5h3M1228 636.5h3M1228 633.5h8M1228 631.5h3M1228 628.5h3M1228 626.5h3M1228 623.5h3M1228 620.5h8M1228 618.5h3M1228 615.5h3M1228 613.5h3M1228 610.5h3M1228 607.5h8M1228 605.5h3M1228 602.5h3M1228 600.5h3M1228 597.5h3M1228 594.5h8M1228 592.5h3M1228 589.5h3M1228 587.5h3M1228 584.5h3M1228 581.5h8M1228 579.5h3M1228 576.5h3M1228 574.5h3M1228 571.5h3M1228 568.5h8M1228 566.5h3M1228 563.5h3M1228 560.5h3M1228 558.5h3M1228 555.5h8M1228 553.5h3M1228 550.5h3M1228 547.5h3M1228 545.5h3M1228 542.5h8M1228 540.5h3M1228 537.5h3M1228 534.5h3M1228 532.5h3M1228 529.5h8M1228 527.5h3M1228 524.5h3M1228 521.5h3M1228 519.5h3M1228 516.5h8M1228 514.5h3M1228 511.5h3" stroke="#000" stroke-width="1" fill="none"/>
<path d="M32 660.5H1227M32 676.5H1227" stroke="#000" stroke-width="1" fill="none"/>
<path d="M68.5 661V676M118.5 661V676M168.5 661V676M218.5 661V676M268.5 661V676M318.5 661V676M368.5 661V676M418.5 661V676M469.5 661V676M519.5 661V676M569.5 661V676M619.5 661V676M669.5 661V676M719.5 661V676M769.5 661V676M820.5 661V676M870.5 661V676M920.5 661V676M970.5 661V676M1020.5 661V676M1070.5 661V676M1120.5 661V676M1171.5 661V676M1221.5 661V676M268.5 676V681" stroke="#000" stroke-width="1" fill="none"/>
</svg>
<span class="t " style="left:1237px;top:104px;font-size:12px;color:#000;">1.4195</span>
<span class="t " style="left:1237px;top:130px;font-size:12px;color:#000;">1.4190</span>
<span class="t " style="left:1237px;top:156px;font-size:12px;color:#000;">1.4185</span>
<span class="t " style="left:1237px;top:183px;font-size:12px;color:#000;">1.4180</span>
<span class="t " style="left:1237px;top:209px;font-size:12px;color:#000;">1.4175</span>
<span class="t " style="left:1237px;top:235px;font-size:12px;color:#000;">1.4170</span>
<span class="t " style="left:1237px;top:262px;font-size:12px;color:#000;">1.4165</span>
<span class="t " style="left:1237px;top:288px;font-size:12px;color:#000;">1.4160</span>
<span class="t " style="left:1237px;top:314px;font-size:12px;color:#000;">1.4155</span>
<div class="a" style="left:1237px;top:340px;width:40px;height:7px;overflow:hidden;"><span class="t" style="left:0;top:0;font-size:12px;">1.4150</span></div>
<span class="t " style="left:1237px;top:367px;font-size:12px;color:#000;">1.4145</span>
<span class="t " style="left:1237px;top:393px;font-size:12px;color:#000;">1.4140</span>
<span class="t " style="left:1237px;top:419px;font-size:12px;color:#000;">1.4135</span>
<span class="t " style="left:1237px;top:446px;font-size:12px;color:#000;">1.4130</span>
<span class="t " style="left:1237px;top:472px;font-size:12px;color:#000;">1.4125</span>
<div class="a" style="left:1232px;top:347px;width:42px;height:16px;background:#000;"></div>
<span class="t " style="left:1234px;top:348px;font-size:12px;color:#00f000;transform:scaleX(0.8646);">1.41480</span>
<span class="t" style="left:1200px;width:73px;text-align:right;top:524px;font-size:12px;">5000</span>
<span class="t" style="left:1200px;width:73px;text-align:right;top:537px;font-size:12px;">4500</span>
<span class="t" style="left:1200px;width:73px;text-align:right;top:550px;font-size:12px;">4000</span>
<span class="t" style="left:1200px;width:73px;text-align:right;top:563px;font-size:12px;">3500</span>
<span class="t" style="left:1200px;width:73px;text-align:right;top:576px;font-size:12px;">3000</span>
<span class="t" style="left:1200px;width:73px;text-align:right;top:589px;font-size:12px;">2500</span>
<span class="t" style="left:1200px;width:73px;text-align:right;top:602px;font-size:12px;">2000</span>
<span class="t" style="left:1200px;width:73px;text-align:right;top:615px;font-size:12px;">1500</span>
<span class="t" style="left:1200px;width:73px;text-align:right;top:628px;font-size:12px;">1000</span>
<span class="t" style="left:1200px;width:73px;text-align:right;top:641px;font-size:12px;">500</span>
<span class="t " style="left:33px;top:662px;font-size:12px;color:#000;">h</span>
<span class="t " style="left:70px;top:662px;font-size:12px;color:#000;transform:scaleX(0.9990);">20h</span>
<span class="t " style="left:120px;top:662px;font-size:12px;color:#000;transform:scaleX(0.9990);">21h</span>
<span class="t " style="left:170px;top:662px;font-size:12px;color:#000;transform:scaleX(0.9990);">22h</span>
<span class="t " style="left:220px;top:662px;font-size:12px;color:#000;transform:scaleX(0.9990);">23h</span>
<span class="t " style="left:270px;top:662px;font-size:12px;color:#000;transform:scaleX(0.9990);">00h</span>
<span class="t " style="left:320px;top:662px;font-size:12px;color:#000;transform:scaleX(0.9990);">01h</span>
<span class="t " style="left:370px;top:662px;font-size:12px;color:#000;transform:scaleX(0.9990);">02h</span>
<span class="t " style="left:420px;top:662px;font-size:12px;color:#000;transform:scaleX(0.9990);">03h</span>
<span class="t " style="left:471px;top:662px;font-size:12px;color:#000;transform:scaleX(0.9990);">04h</span>
<span class="t " style="left:521px;top:662px;font-size:12px;color:#000;transform:scaleX(0.9990);">05h</span>
<span class="t " style="left:571px;top:662px;font-size:12px;color:#000;transform:scaleX(0.9990);">06h</span>
<span class="t " style="left:621px;top:662px;font-size:12px;color:#000;transform:scaleX(0.9990);">07h</span>
<span class="t " style="left:671px;top:662px;font-size:12px;color:#000;transform:scaleX(0.9990);">08h</span>
<span class="t " style="left:721px;top:662px;font-size:12px;color:#000;transform:scaleX(0.9990);">09h</span>
<span class="t " style="left:771px;top:662px;font-size:12px;color:#000;transform:scaleX(0.9990);">10h</span>
<span class="t " style="left:822px;top:662px;font-size:12px;color:#000;transform:scaleX(1.0455);">11h</span>
<span class="t " style="left:872px;top:662px;font-size:12px;color:#000;transform:scaleX(0.9990);">12h</span>
<span class="t " style="left:922px;top:662px;font-size:12px;color:#000;transform:scaleX(0.9990);">13h</span>
<span class="t " style="left:972px;top:662px;font-size:12px;color:#000;transform:scaleX(0.9990);">14h</span>
<span class="t " style="left:1022px;top:662px;font-size:12px;color:#000;transform:scaleX(0.9990);">15h</span>
<span class="t " style="left:1072px;top:662px;font-size:12px;color:#000;transform:scaleX(0.9990);">16h</span>
<span class="t " style="left:1122px;top:662px;font-size:12px;color:#000;transform:scaleX(0.9990);">17h</span>
<span class="t " style="left:1173px;top:662px;font-size:12px;color:#000;transform:scaleX(0.9990);">18h</span>
<div class="a" style="left:1223px;top:662px;width:4px;height:14px;overflow:hidden;"><span class="t" style="left:0;top:0;font-size:12px;color:#e8a040;">19h</span></div>
<span class="t " style="left:270px;top:678px;font-size:12px;color:#000;">28</span>
<div class="a" style="left:30px;top:692px;width:1250px;height:19px;background:#f0f0f0;"></div><div class="a" style="left:30px;top:692px;width:1198px;height:3px;background:#f9f9f9;"></div><div class="a" style="left:30px;top:695px;width:1085px;height:15px;background:linear-gradient(180deg,#e4e4e4 0,#ebebeb 3px,#eeeeee 100%);"></div>

<div class="a" style="left:538px;top:695px;width:558px;height:15px;border:1px solid #979797;border-radius:2px;box-sizing:border-box;background:linear-gradient(180deg,#f2f2f2 0,#e6e6e6 45%,#d2d2d2 55%,#cfcfcf 100%);"></div>
<svg style="left:30px;top:693px" width="1250" height="18" viewBox="30 693 1250 18"><path d="M40.500 698.500l-4.500 4 4.500 4z" fill="#303030"/><path d="M813.500 699v6M816.500 699v6M819.500 699v6" stroke="#404040" stroke-width="1"/><path d="M1105 698.500l4 4 -4 4z" fill="#404040"/><path d="M1117.500 696v13M1157.500 696v13M1231.500 696v13" stroke="#909090" stroke-width="1"/><path d="M1131 699h-3q-2 0 -2 2v2M1126 706h3q2 0 2 -2v-2" fill="none" stroke="#000" stroke-width="1.500"/><path d="M1129.500 696.500l2.500 2.500 -2.500 2.500zM1127.500 703.500l-2.500 2.500 2.500 2.500z" fill="#000"/><path d="M1142.500 698.500h6M1142.500 706.500h6M1145.500 698v9" stroke="#000" stroke-width="1.400"/><path d="M1169 697l3.500 4.500h-7zM1169 707.500l3.500 -4.500h-7z" fill="#000"/><rect x="1168" y="700" width="2" height="5" fill="#000"/><path d="M1186.500 699v7M1183 702.500h7" stroke="#000" stroke-width="1.200"/><path d="M1186.500 697.500l2.500 2.500h-5zM1186.500 707.500l2.500 -2.500h-5zM1181.500 702.500l2.500 -2.500v5zM1191.500 702.500l-2.500 -2.500v5z" fill="#000"/><circle cx="1203.500" cy="702.500" r="4.500" fill="none" stroke="#000" stroke-width="1.200"/><path d="M1201 702.500h5" stroke="#000" stroke-width="1.500"/><circle cx="1220.500" cy="702.500" r="4.500" fill="none" stroke="#000" stroke-width="1.200"/><path d="M1218 702.500h5M1220.500 700v5" stroke="#000" stroke-width="1.500"/><path d="M1245.500 698v9l-6 -4.500zM1257.500 698v9l6 -4.500z" fill="#000"/><path d="M1272.500 707v-9.500h8M1272 700.500h8M1275 703.500h5M1275 705.500h5M1272 707.500h8" fill="none" stroke="#000" stroke-width="1"/></svg>
<div class="a" style="left:0;top:711px;width:1280px;height:29px;background:#f0f0f0;"></div>
<div class="a" style="left:0;top:711px;width:30px;height:1px;background:#a0a0a0;"></div><div class="a" style="left:30px;top:711px;width:1250px;height:1px;background:#f8f8f8;"></div>
<div class="a" style="left:0;top:739px;width:1280px;height:1px;background:#a0a0a0;"></div>
<div class="a" style="left:0;top:740px;width:1280px;height:1px;background:#fff;"></div>
<div class="a" style="left:2px;top:716px;width:2px;height:21px;border-left:1px solid #fff;border-right:1px solid #a0a0a0;box-sizing:border-box;width:3px;"></div>
<div class="a" style="left:13px;top:717px;width:129px;height:19px;box-sizing:border-box;background:#fff;border-radius:3px;border:1px solid #e2e5ea;border-top-color:#b9bdc6;"></div>
<div class="a" style="left:150px;top:717px;width:98px;height:19px;box-sizing:border-box;background:#fff;border-radius:3px;border:1px solid #e2e5ea;border-top-color:#b9bdc6;"></div>
<svg style="left:0;top:712px" width="600" height="28" viewBox="0 712 600 28"><path d="M29 727.500h80M161 727.500h59" stroke="#000" stroke-width="1"/><path d="M130 725h8l-4 4.500zM236 725h8l-4 4.500z" fill="#000"/><path d="M145.500 717v20M255.500 714v25M372.500 714v25M585.500 714v25" stroke="#a0a0a0"/><path d="M146.500 717v20M256.500 714v25M373.500 714v25M586.500 714v25" stroke="#fff"/><rect x="272.5" y="718.500" width="8" height="8" fill="#000" stroke="#8a8a8a" stroke-width="1"/><rect x="283.5" y="718.500" width="8" height="8" fill="#0000ff" stroke="#8a8a8a" stroke-width="1"/><rect x="294.5" y="718.500" width="8" height="8" fill="#00ffff" stroke="#8a8a8a" stroke-width="1"/><rect x="304.5" y="718.500" width="8" height="8" fill="#00ff00" stroke="#8a8a8a" stroke-width="1"/><rect x="314.5" y="718.500" width="8" height="8" fill="#ff00ff" stroke="#8a8a8a" stroke-width="1"/><rect x="324.5" y="718.500" width="8" height="8" fill="#ff0000" stroke="#8a8a8a" stroke-width="1"/><rect x="334.5" y="718.500" width="8" height="8" fill="#ffff00" stroke="#8a8a8a" stroke-width="1"/><rect x="344.5" y="718.500" width="8" height="8" fill="#ffffff" stroke="#8a8a8a" stroke-width="1"/><rect x="272.5" y="728.500" width="8" height="8" fill="#000080" stroke="#8a8a8a" stroke-width="1"/><rect x="283.5" y="728.500" width="8" height="8" fill="#008080" stroke="#8a8a8a" stroke-width="1"/><rect x="294.5" y="728.500" width="8" height="8" fill="#008000" stroke="#8a8a8a" stroke-width="1"/><rect x="304.5" y="728.500" width="8" height="8" fill="#800080" stroke="#8a8a8a" stroke-width="1"/><rect x="314.5" y="728.500" width="8" height="8" fill="#800000" stroke="#8a8a8a" stroke-width="1"/><rect x="324.5" y="728.500" width="8" height="8" fill="#808000" stroke="#8a8a8a" stroke-width="1"/><rect x="334.5" y="728.500" width="8" height="8" fill="#808080" stroke="#8a8a8a" stroke-width="1"/><rect x="344.5" y="728.500" width="8" height="8" fill="#c0c0c0" stroke="#8a8a8a" stroke-width="1"/><rect x="323.500" y="717.500" width="9" height="9" fill="#fff" stroke="#000" stroke-width="1" stroke-dasharray="1 1"/><rect x="325" y="719" width="6" height="6" fill="#ff0000"/><path d="M356 726h6l-3 3.500z" fill="#000"/></svg>
<div class="a" style="left:259px;top:716px;width:2px;height:21px;border-left:1px solid #fff;border-right:1px solid #a0a0a0;box-sizing:border-box;width:3px;"></div>
<div class="a" style="left:376px;top:716px;width:2px;height:21px;border-left:1px solid #fff;border-right:1px solid #a0a0a0;box-sizing:border-box;width:3px;"></div>
<div class="a" style="left:589px;top:716px;width:2px;height:21px;border-left:1px solid #fff;border-right:1px solid #a0a0a0;box-sizing:border-box;width:3px;"></div>
<svg style="left:385px;top:714px" width="200" height="26" viewBox="385 714 200 26"><g transform="translate(398.5 727)"><circle r="7" fill="#e33b2e"/><path d="M0 0L-6.060 -3.500A7 7 0 0 0 -0.900 6.940z" fill="#2ba24c"/><path d="M0 0L-0.900 6.940A7 7 0 0 0 6.500 -2.600z" fill="#fbc116"/><circle r="3.400" fill="#fff"/><circle r="2.500" fill="#4a8af4"/></g><g transform="translate(422.5 727)"><circle r="7" fill="#e33b2e"/><path d="M0 0L-6.060 -3.500A7 7 0 0 0 -0.900 6.940z" fill="#2ba24c"/><path d="M0 0L-0.900 6.940A7 7 0 0 0 6.500 -2.600z" fill="#fbc116"/><circle r="3.400" fill="#fff"/><circle r="2.500" fill="#4a8af4"/></g><g transform="translate(446.5 727)"><circle r="7" fill="#e33b2e"/><path d="M0 0L-6.060 -3.500A7 7 0 0 0 -0.900 6.940z" fill="#2ba24c"/><path d="M0 0L-0.900 6.940A7 7 0 0 0 6.500 -2.600z" fill="#fbc116"/><circle r="3.400" fill="#fff"/><circle r="2.500" fill="#4a8af4"/></g><rect x="465.500" y="723.500" width="11" height="8" fill="#fff" stroke="#000"/><path d="M467 730l7 -7" stroke="#e00000" stroke-width="1.200"/><path d="M470.500 720.500l1.500 -1v6" stroke="#000" fill="none"/><rect x="489.500" y="723.500" width="11" height="8" fill="#fff" stroke="#000"/><path d="M491 730l7 -7" stroke="#e00000" stroke-width="1.200"/><path d="M494.500 720.500l1.500 -1v6" stroke="#000" fill="none"/><rect x="514.5" y="720.500" width="11" height="4" fill="#f4f4f4" stroke="#909090"/><rect x="514.5" y="725.500" width="11" height="7" fill="#fff" stroke="#000"/><path d="M514 726h12" stroke="#000090" stroke-width="2"/><rect x="538.5" y="720.500" width="11" height="4" fill="#f4f4f4" stroke="#909090"/><rect x="538.5" y="725.500" width="11" height="7" fill="#fff" stroke="#000"/><path d="M538 726h12" stroke="#000090" stroke-width="2"/><rect x="562.5" y="720.500" width="11" height="4" fill="#f4f4f4" stroke="#909090"/><rect x="562.5" y="725.500" width="11" height="7" fill="#fff" stroke="#000"/><path d="M562 726h12" stroke="#000090" stroke-width="2"/></svg>
<div class="a" style="left:600px;top:717px;width:63px;height:19px;box-sizing:border-box;border:1px solid #8a8a8a;border-right-color:#e8e8e8;border-bottom-color:#e8e8e8;background:#f4f4f4;"></div>
<span class="t " style="left:602px;top:720px;font-size:12px;color:#000;transform:scaleX(0.9058);">6E Z1</span>
<div class="a" style="left:667px;top:717px;width:1px;height:20px;background:#a0a0a0;"></div><div class="a" style="left:668px;top:717px;width:1px;height:20px;background:#fff;"></div>
<div class="a" style="left:671px;top:716px;width:79px;height:22px;box-sizing:border-box;border:1px solid #707070;border-radius:3px;background:linear-gradient(180deg,#f2f2f2 0,#ebebeb 48%,#dddddd 52%,#cfcfcf 100%);box-shadow:inset 0 0 0 1px rgba(255,255,255,.7);"></div>
<div class="a" style="left:757px;top:716px;width:150px;height:22px;box-sizing:border-box;border:1px solid #707070;border-radius:3px;background:linear-gradient(180deg,#f2f2f2 0,#ebebeb 48%,#dddddd 52%,#cfcfcf 100%);box-shadow:inset 0 0 0 1px rgba(255,255,255,.7);"></div>
<div class="a" style="left:753px;top:717px;width:1px;height:20px;background:#a0a0a0;"></div><div class="a" style="left:754px;top:717px;width:1px;height:20px;background:#fff;"></div>
<div class="a" style="left:909px;top:717px;width:1px;height:20px;background:#a0a0a0;"></div><div class="a" style="left:910px;top:717px;width:1px;height:20px;background:#fff;"></div>
<svg style="left:735px;top:725px" width="170" height="6" viewBox="0 0 170 6"><path d="M2 0h8l-4 4.500zM159 0h8l-4 4.500z" fill="#000"/></svg>
<span class="t " style="left:761px;top:720px;font-size:12px;color:#000;transform:scaleX(0.8767);">&lt;No Vendor&gt;</span>
<div class="a" style="left:914px;top:718px;width:63px;height:19px;box-sizing:border-box;border:1px solid #adb2b5;border-radius:3px;background:#f4f4f4;"></div>
<span class="t " style="left:932px;top:720px;font-size:12px;color:#838383;transform:scaleX(0.9061);">Trade</span>
<div class="a" style="left:984px;top:714px;width:1px;height:25px;background:#a0a0a0;"></div><div class="a" style="left:985px;top:714px;width:1px;height:25px;background:#fff;"></div>
<div class="a" style="left:0;top:741px;width:1280px;height:19px;background:#f0eded;"></div>
<span class="t " style="left:3px;top:745px;font-size:12px;color:#000;transform:scaleX(0.9499);">Creates a new chart</span>
<div class="a" style="left:1051px;top:743px;width:1px;height:17px;background:#d0cccc;"></div>
<div class="a" style="left:1107px;top:743px;width:1px;height:17px;background:#d0cccc;"></div>
<div class="a" style="left:1178px;top:743px;width:1px;height:17px;background:#d0cccc;"></div>
<div class="a" style="left:1219px;top:743px;width:1px;height:17px;background:#d0cccc;"></div>
<div class="a" style="left:1243px;top:743px;width:1px;height:17px;background:#d0cccc;"></div>
<span class="t " style="left:1182px;top:745px;font-size:12px;color:#10081c;transform:scaleX(0.9610);">11:19</span>
<span class="t " style="left:1228px;top:743px;font-size:14px;color:#0c8a0c;font-weight:bold;line-height:16px;">$</span>
<div class="a" style="left:0;top:760px;width:1280px;height:8px;background:linear-gradient(180deg,#1b2f4c 0,#2c466b 2px,#24416a 100%);"></div>
<div class="a" style="left:0;top:760px;width:1280px;height:8px;background:linear-gradient(90deg,#44597a 0,#2c466b 10%,#1f3a60 40%,#1c375c 60%,#27446a 100%);opacity:.7"></div>
<div class="a" style="left:0;top:760px;width:1280px;height:1px;background:#101c30;"></div>
<div class="a" style="left:10px;top:762px;width:34px;height:20px;border-radius:17px;background:radial-gradient(circle at 50% 60%,#9ec0e4 0,#5f86b4 60%,#3a5a86 100%);border:1px solid #cfe0f2;"></div>
<div class="a" style="left:122px;top:761px;width:58px;height:10px;border:1px solid #b8c6d8;border-radius:3px 3px 0 0;background:linear-gradient(180deg,#9fb3cc,#7d96b6);box-sizing:border-box;"></div>
<div class="a" style="left:308px;top:761px;width:60px;height:10px;border:1px solid #b8c6d8;border-radius:3px 3px 0 0;background:linear-gradient(180deg,#9fb3cc,#7d96b6);box-sizing:border-box;"></div>
<div class="a" style="left:368px;top:761px;width:58px;height:10px;border:1px solid #b8c6d8;border-radius:3px 3px 0 0;background:linear-gradient(180deg,#9fb3cc,#7d96b6);box-sizing:border-box;"></div>
<div class="a" style="left:430px;top:761px;width:60px;height:10px;border:1px solid #b8c6d8;border-radius:3px 3px 0 0;background:linear-gradient(180deg,#9fb3cc,#7d96b6);box-sizing:border-box;"></div>
<div class="a" style="left:135px;top:764px;width:32px;height:4px;background:#e8eef6;border-radius:2px 2px 0 0;"></div>
<div class="a" style="left:77px;top:766px;width:12px;height:2px;background:#c8a040;"></div>
<div class="a" style="left:197px;top:765px;width:18px;height:3px;background:#d8d8d8;"></div>
<div class="a" style="left:266px;top:765px;width:12px;height:3px;background:#d04030;border-radius:6px 6px 0 0;"></div>
<div class="a" style="left:322px;top:765px;width:26px;height:3px;background:#8ab0e0;"></div>
<div class="a" style="left:382px;top:764px;width:32px;height:4px;background:#202020;border:1px solid #ddd;border-bottom:none;"></div>
<span class="t" style="left:443px;top:762px;font-family:'Liberation Serif',serif;font-weight:bold;font-size:22px;line-height:22px;color:#e01010;">MS</span>
<div class="a" style="left:1267px;top:761px;width:13px;height:7px;background:linear-gradient(180deg,#8a9bb4,#5d7494);border-left:1px solid #aab8cc;"></div>
<div class="a" style="left:23px;top:42px;width:137px;height:385px;box-sizing:border-box;background:#f0f0f0;border:1px solid #979797;box-shadow:3px 3px 3px rgba(0,0,0,.45);"></div>
<div class="a" style="left:26px;top:44px;width:128px;height:20px;background:#3399ff;"></div>
<span class="t " style="left:49px;top:48px;font-size:12px;color:#fff;transform:scaleX(0.9998);"><u>N</u>ew</span>
<span class="t " style="left:102px;top:48px;font-size:12px;color:#fff;transform:scaleX(1.0193);">Ctrl+N</span>
<svg style="left:146px;top:49px" width="5" height="8" viewBox="0 0 5 8"><path d="M0 0l4.500 3.750 -4.500 3.750z" fill="#fff"/></svg>
<span class="t " style="left:49px;top:68px;font-size:12px;color:#000;transform:scaleX(0.9401);"><u>O</u>pen...</span>
<span class="t " style="left:102px;top:68px;font-size:12px;color:#000;transform:scaleX(0.9999);">Ctrl+O</span>
<span class="t " style="left:49px;top:88px;font-size:12px;color:#000;transform:scaleX(0.9453);"><u>C</u>lose</span>
<span class="t " style="left:49px;top:108px;font-size:12px;color:#000;transform:scaleX(0.9746);">Clos<u>e</u> All</span>
<div class="a" style="left:28px;top:129px;width:127px;height:1px;background:#a0a0a0;"></div>
<div class="a" style="left:28px;top:130px;width:127px;height:1px;background:#fff;"></div>
<span class="t " style="left:49px;top:138px;font-size:12px;color:#000;transform:scaleX(0.8775);"><u>S</u>ave</span>
<span class="t " style="left:104px;top:138px;font-size:12px;color:#000;transform:scaleX(0.9800);">Ctrl+S</span>
<span class="t " style="left:49px;top:158px;font-size:12px;color:#000;transform:scaleX(0.8884);">Save <u>A</u>s...</span>
<span class="t " style="left:49px;top:178px;font-size:12px;color:#000;transform:scaleX(0.9225);">Save A<u>l</u>l</span>
<span class="t " style="left:49px;top:198px;font-size:12px;color:#000;transform:scaleX(0.9176);">Save as <u>H</u>TML...</span>
<div class="a" style="left:28px;top:219px;width:127px;height:1px;background:#a0a0a0;"></div>
<div class="a" style="left:28px;top:220px;width:127px;height:1px;background:#fff;"></div>
<span class="t " style="left:49px;top:228px;font-size:12px;color:#000;transform:scaleX(0.9694);">Chan<u>g</u>e Security</span>
<svg style="left:146px;top:229px" width="5" height="8" viewBox="0 0 5 8"><path d="M0 0l4.500 3.750 -4.500 3.750z" fill="#000"/></svg>
<span class="t " style="left:49px;top:248px;font-size:12px;color:#9a9a9a;transform:scaleX(0.9827);">Edit La<u>y</u>out</span>
<div class="a" style="left:28px;top:269px;width:127px;height:1px;background:#a0a0a0;"></div>
<div class="a" style="left:28px;top:270px;width:127px;height:1px;background:#fff;"></div>
<span class="t " style="left:49px;top:278px;font-size:12px;color:#000;transform:scaleX(0.9213);">Page Set<u>u</u>p...</span>
<span class="t " style="left:49px;top:298px;font-size:12px;color:#000;transform:scaleX(0.9761);">Print Pre<u>v</u>iew</span>
<span class="t " style="left:49px;top:318px;font-size:12px;color:#000;transform:scaleX(0.9804);"><u>P</u>rint...</span>
<span class="t " style="left:104px;top:318px;font-size:12px;color:#000;transform:scaleX(0.9800);">Ctrl+P</span>
<div class="a" style="left:28px;top:339px;width:127px;height:1px;background:#a0a0a0;"></div>
<div class="a" style="left:28px;top:340px;width:127px;height:1px;background:#fff;"></div>
<span class="t " style="left:49px;top:348px;font-size:12px;color:#000;transform:scaleX(0.8941);">Sen<u>d</u>...</span>
<div class="a" style="left:28px;top:369px;width:127px;height:1px;background:#a0a0a0;"></div>
<div class="a" style="left:28px;top:370px;width:127px;height:1px;background:#fff;"></div>
<span class="t " style="left:49px;top:378px;font-size:12px;color:#9a9a9a;transform:scaleX(0.9392);">Recent File</span>
<div class="a" style="left:28px;top:399px;width:127px;height:1px;background:#a0a0a0;"></div>
<div class="a" style="left:28px;top:400px;width:127px;height:1px;background:#fff;"></div>
<span class="t " style="left:49px;top:408px;font-size:12px;color:#000;transform:scaleX(0.8998);">E<u>x</u>it</span>
<svg style="left:26px;top:65px" width="20" height="17" viewBox="26 65 20 17"><path d="M27.500 80.500v-9.500l1 -.5h3.500l.5 1h6v4" fill="#ffff40" stroke="#000" stroke-width="1.100"/><path d="M29 72.500h8.500M29 74h4" stroke="#fff" stroke-width="1" stroke-dasharray="1 1"/><path d="M27.500 80.500l4 -5h12.500l-5 5z" fill="#808000" stroke="#000" stroke-width="1.100"/><path d="M36.500 68.500q2.500 -2.500 5.500 0l1.500 1.500" fill="none" stroke="#000" stroke-width="1.100"/><path d="M44 67.500v3h-3.500z" fill="#000"/></svg>
<svg style="left:28px;top:136px" width="16" height="15" viewBox="28 136 16 15" shape-rendering="crispEdges"><path d="M28 136h16v15h-15l-1 -1z" fill="#000"/><rect x="29" y="137" width="3" height="13" fill="#808000"/><rect x="42" y="139" width="1" height="11" fill="#808000"/><rect x="41" y="144" width="2" height="6" fill="#808000"/><rect x="29" y="145" width="14" height="1" fill="#808000"/><rect x="29" y="143" width="3" height="3" fill="#808000"/><rect x="40" y="143" width="3" height="3" fill="#808000"/><rect x="32" y="137" width="8" height="6" fill="#fff"/><rect x="38" y="147" width="2" height="3" fill="#fff"/><rect x="42" y="137" width="1" height="1" fill="#fff"/></svg>
<svg style="left:26px;top:295px" width="21" height="18" viewBox="26 295 21 18"><path d="M27.500 296.500h8.500l3.500 3.500v11.500h-12z" fill="#fff" stroke="#000" stroke-width="1.200"/><path d="M36 296.500v3.500h3.500" fill="#fff" stroke="#000" stroke-width="1"/><circle cx="38.700" cy="304.700" r="3.900" fill="#fff" stroke="#000" stroke-width="1.400"/><path d="M36.500 303.500l1 -1.500 1 1.500zM38 306.500h1.500" stroke="#00e8f8" stroke-width="1.200" fill="#00e8f8"/><rect x="39.800" y="303" width="1.600" height="3.400" fill="#b0b0b0"/><path d="M41.500 308l3.300 3.300" stroke="#000" stroke-width="2.200"/></svg>
<svg style="left:26px;top:316px" width="21" height="17" viewBox="26 316 21 17"><path d="M32.500 320.500l2 -3.500h9l-1.500 3.500z" fill="#fff" stroke="#000" stroke-width="1.100"/><path d="M35 318.500h6M34 319.800h5" stroke="#000" stroke-width=".8"/><path d="M27.500 324.500q0 -2 4 -4h10.500q3 0 3 3v4.500q0 2 -3.500 4.500h-11q-3 -1 -3 -3.500z" fill="#fff" stroke="#000" stroke-width="1.200"/><path d="M28.500 323.500h12" stroke="#000" stroke-width="2.200"/><path d="M28 326.500h13M29.500 330.500h11" stroke="#000" stroke-width="1.500"/><path d="M41.500 321v10" stroke="#000" stroke-width="1"/><path d="M43 322.500v7" stroke="#000" stroke-width="1.200" stroke-dasharray="1.500 1.500"/><rect x="31.500" y="321" width="1.600" height="1.600" fill="#000"/><rect x="40" y="320.500" width="2" height="2" fill="#000"/><rect x="34.500" y="327.700" width="3.200" height="1.300" fill="#f0e000"/></svg>
<div class="a" style="left:155px;top:42px;width:101px;height:85px;box-sizing:border-box;background:#f0f0f0;border:1px solid #979797;box-shadow:3px 3px 3px rgba(0,0,0,.45);"></div>
<div class="a" style="left:157px;top:44px;width:96px;height:20px;background:#3399ff;"></div>
<span class="t " style="left:180px;top:48px;font-size:12px;color:#fff;transform:scaleX(0.9531);"><u>C</u>hart...</span>
<span class="t " style="left:180px;top:68px;font-size:12px;color:#000;transform:scaleX(0.9667);"><u>L</u>ayout...</span>
<span class="t " style="left:180px;top:88px;font-size:12px;color:#000;transform:scaleX(0.9531);"><u>S</u>ecurity...</span>
<span class="t " style="left:180px;top:108px;font-size:12px;color:#000;transform:scaleX(0.9543);"><u>B</u>rowser</span>
</div>
</body></html>
